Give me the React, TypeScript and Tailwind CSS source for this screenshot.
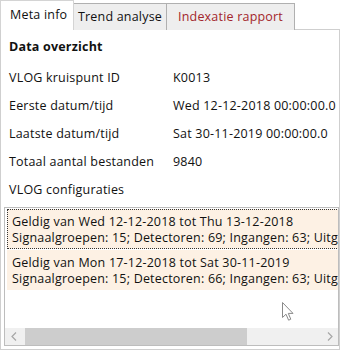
import React from "react";

const rows: [string, string][] = [
  ["VLOG kruispunt ID", "K0013"],
  ["Eerste datum/tijd", "Wed 12-12-2018 00:00:00.0"],
  ["Laatste datum/tijd", "Sat 30-11-2019 00:00:00.0"],
  ["Totaal aantal bestanden", "9840"],
];

const items: [string, string][] = [
  ["Geldig van Wed 12-12-2018 tot Thu 13-12-2018", "Signaalgroepen: 15; Detectoren: 69; Ingangen: 63; Uitgangen: 40"],
  ["Geldig van Mon 17-12-2018 tot Sat 30-11-2019", "Signaalgroepen: 15; Detectoren: 66; Ingangen: 63; Uitgangen: 40"],
];

export default function App() {
  return (
    <div
      className="relative w-[341px] h-[352px] bg-white text-[12.5px] tracking-[0.2px] text-[#111] overflow-hidden"
      style={{ fontFamily: '"Open Sans", "Noto Sans", sans-serif' }}
    >
      <div className="flex items-end h-[30px] -mb-px relative z-10">
        <div className="w-[74px] h-[30px] border border-b-0 border-[#d4d4d4] bg-white pl-[9px] leading-[28px]">
          Meta info
        </div>
        <div className="w-[93px] h-[27px] border border-l-0 border-b-0 border-[#b0b0b0] bg-[#eeeeee] flex items-center justify-center">
          Trend analyse
        </div>
        <div className="w-[128px] h-[27px] border border-l-0 border-b-0 border-[#b0b0b0] bg-[#eeeeee] flex items-center justify-center text-[#a3262c]">
          Indexatie rapport
        </div>
      </div>
      <div className="w-[340px] h-[321px] border border-[#cfcfcf] bg-white flex flex-col">
        <div className="h-[34px] flex items-center pl-[8px] font-bold">Data overzicht</div>
        {rows.map(([k, v]) => (
          <div key={k} className="h-[28px] flex items-center pl-[8px]">
            <div className="w-[164px] shrink-0">{k}</div>
            <div className="whitespace-nowrap">{v}</div>
          </div>
        ))}
        <div className="h-[28px] flex items-center pl-[8px]">VLOG configuraties</div>
        <div className="mt-[3px] ml-[3px] w-[335px] h-[139px] border border-[#bdbdbd] flex flex-col">
          <div className="flex-1 overflow-hidden pl-[2px] pt-px flex flex-col gap-px">
            {items.map(([a, b], i) => (
              <div
                key={a}
                className={
                  "w-[440px] h-[40px] pl-[4px] pt-[4px] leading-[16px] whitespace-nowrap bg-[#fdf1e4] " +
                  (i === 0 ? "border border-dotted border-[#333]" : "border border-transparent")
                }
              >
                <div>{a}</div>
                <div>{b}</div>
              </div>
            ))}
          </div>
          <div className="h-[17px] bg-[#f0f0f0] flex items-center">
            <div className="w-[17px] h-[17px] flex items-center justify-center">
              <svg width="6" height="9" viewBox="0 0 6 9">
                <path d="M5 0.5 L1 4.5 L5 8.5" fill="none" stroke="#a6a6a6" strokeWidth="1.2" />
              </svg>
            </div>
            <div className="flex-1 h-[17px] flex items-center pl-[3px] pr-[3px]">
              <div className="w-[222px] h-[17px] bg-[#cdcdcd]" />
            </div>
            <div className="w-[17px] h-[17px] flex items-center justify-center">
              <svg width="6" height="9" viewBox="0 0 6 9">
                <path d="M1 0.5 L5 4.5 L1 8.5" fill="none" stroke="#a6a6a6" strokeWidth="1.2" />
              </svg>
            </div>
          </div>
        </div>
      </div>
      <svg className="absolute left-[282px] top-[302px]" width="13" height="20" viewBox="0 0 13 20">
        <path
          d="M0.5 0.5 L0.5 15.5 L4 12.2 L6.6 18.2 L8.8 17.2 L6.3 11.4 L11 11.4 Z"
          fill="#ffffff"
          stroke="#8a8a8a"
          strokeWidth="1"
          strokeLinejoin="round"
        />
      </svg>
    </div>
  );
}
